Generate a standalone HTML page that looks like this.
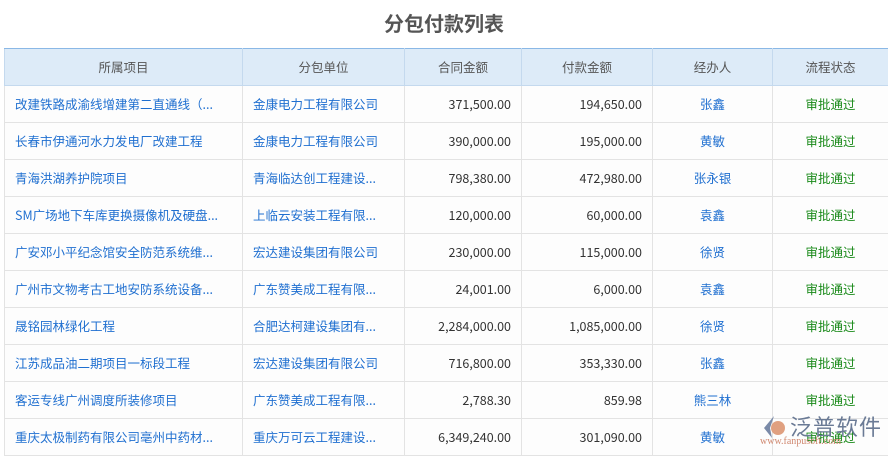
<!DOCTYPE html><html><head><meta charset="utf-8"><style>
body{margin:0;width:888px;height:459px;overflow:hidden;background:#fff;font-family:"Liberation Sans","Noto Sans CJK SC",sans-serif;}
h1{margin:0;height:48px;line-height:46px;text-align:center;font-size:20px;font-weight:bold;color:#555;font-family:"Noto Sans CJK SC",sans-serif;}
table{position:absolute;top:48px;left:4px;width:884px;border-collapse:collapse;table-layout:fixed;font-size:12.5px;font-family:"Noto Sans CJK SC",sans-serif;}
tr{height:37px;}
td,th{border:1px solid #e3e3e3;height:37px;line-height:16px;padding:0 10px;white-space:nowrap;overflow:hidden;text-overflow:ellipsis;box-sizing:border-box;}
th{background:#ddebf8;color:#555;font-weight:normal;border-color:#c4d9ee;border-top:1px solid #8ab8e6;}
td{color:#1f6fd0;background:#fdfdfd;}
.r{text-align:right;color:#333}.c{text-align:center}.g{color:#1a8a1a;text-align:center}
.logo{position:absolute;left:760px;top:412px;}
</style></head><body>
<h1>分包付款列表</h1>
<table>
<colgroup><col style="width:238px"><col style="width:162px"><col style="width:117px"><col style="width:131px"><col style="width:120px"><col style="width:116px"></colgroup>
<tr><th>所属项目</th><th>分包单位</th><th>合同金额</th><th>付款金额</th><th>经办人</th><th>流程状态</th></tr>
<tr><td>改建铁路成渝线增建第二直通线（...</td><td>金康电力工程有限公司</td><td class="r">371,500.00</td><td class="r">194,650.00</td><td class="c">张鑫</td><td class="g">审批通过</td></tr>
<tr><td>长春市伊通河水力发电厂改建工程</td><td>金康电力工程有限公司</td><td class="r">390,000.00</td><td class="r">195,000.00</td><td class="c">黄敏</td><td class="g">审批通过</td></tr>
<tr><td>青海洪湖养护院项目</td><td>青海临达创工程建设...</td><td class="r">798,380.00</td><td class="r">472,980.00</td><td class="c">张永银</td><td class="g">审批通过</td></tr>
<tr><td>SM广场地下车库更换摄像机及硬盘...</td><td>上临云安装工程有限...</td><td class="r">120,000.00</td><td class="r">60,000.00</td><td class="c">袁鑫</td><td class="g">审批通过</td></tr>
<tr><td>广安邓小平纪念馆安全防范系统维...</td><td>宏达建设集团有限公司</td><td class="r">230,000.00</td><td class="r">115,000.00</td><td class="c">徐贤</td><td class="g">审批通过</td></tr>
<tr><td>广州市文物考古工地安防系统设备...</td><td>广东赞美成工程有限...</td><td class="r">24,001.00</td><td class="r">6,000.00</td><td class="c">袁鑫</td><td class="g">审批通过</td></tr>
<tr><td>晟铭园林绿化工程</td><td>合肥达柯建设集团有...</td><td class="r">2,284,000.00</td><td class="r">1,085,000.00</td><td class="c">徐贤</td><td class="g">审批通过</td></tr>
<tr><td>江苏成品油二期项目一标段工程</td><td>宏达建设集团有限公司</td><td class="r">716,800.00</td><td class="r">353,330.00</td><td class="c">张鑫</td><td class="g">审批通过</td></tr>
<tr><td>客运专线广州调度所装修项目</td><td>广东赞美成工程有限...</td><td class="r">2,788.30</td><td class="r">859.98</td><td class="c">熊三林</td><td class="g">审批通过</td></tr>
<tr><td>重庆太极制药有限公司亳州中药材...</td><td>重庆万可云工程建设...</td><td class="r">6,349,240.00</td><td class="r">301,090.00</td><td class="c">黄敏</td><td class="g">审批通过</td></tr>
</table>
<div class="logo">
<svg width="28" height="26" style="position:absolute;left:0;top:2px"><path d="M14 2 L4 14 L12 24 L10 14 Z" fill="#7a8aa8"/><circle cx="18" cy="14" r="7" fill="#e0a080"/></svg>
<div style="position:absolute;left:30px;top:-2px;font-size:22px;color:#6a7a95;letter-spacing:1px;white-space:nowrap">泛普软件</div>
<div style="position:absolute;left:0;top:24px;font-size:10px;color:#d08870;font-family:'Liberation Serif',serif;white-space:nowrap">www.fanpusoft.com</div>
</div>
</body></html>
